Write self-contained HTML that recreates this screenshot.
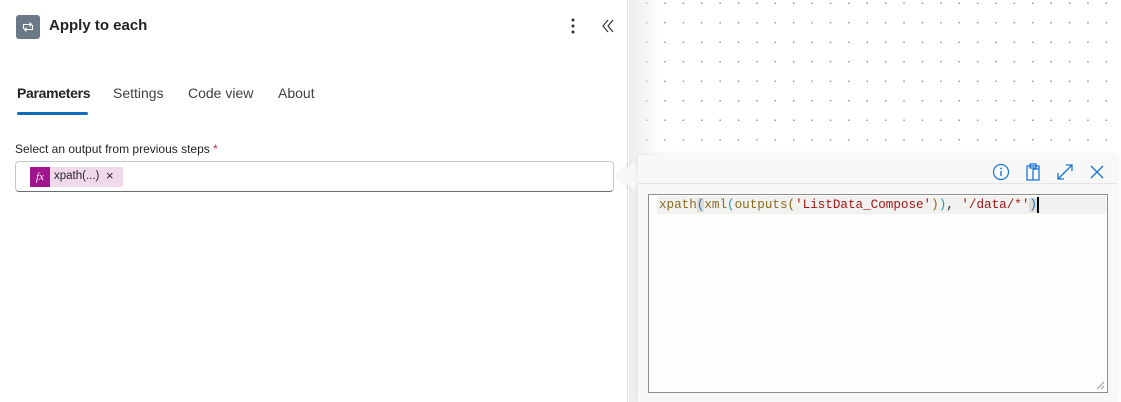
<!DOCTYPE html>
<html><head><meta charset="utf-8"><style>
*{margin:0;padding:0;box-sizing:border-box}
body{width:1121px;height:402px;overflow:hidden;background:#fff;font-family:"Liberation Sans",sans-serif;position:relative}
.left{position:absolute;left:0;top:0;width:628px;height:402px;background:#fff;border-right:1px solid #e0e0e0}
.canvas{position:absolute;left:629px;top:0;right:0;height:402px;background-color:#fff;background-image:radial-gradient(circle,#9a9a9a 0.8px,transparent 1px);background-size:18.4px 19.5px;background-position:-10px 13px}
.shade{position:absolute;left:629px;top:0;width:30px;height:402px;background:linear-gradient(90deg,#ececec,rgba(255,255,255,0))}
.icon{position:absolute;left:16px;top:15px;width:24px;height:24px;background:#6b7885;border-radius:3px}
.title{position:absolute;left:49px;top:17px;font-size:15px;font-weight:bold;color:#242424}
.tabs{position:absolute;top:85px;left:17px;font-size:14px;color:#424242}
.tabs span{position:absolute;white-space:nowrap}
.ul{position:absolute;left:17px;top:112px;width:71px;height:3px;background:#0f6cbd;border-radius:2px}
.lbl{position:absolute;left:15px;top:142px;font-size:12px;color:#242424}
.box{position:absolute;left:15px;top:161px;width:599px;height:31px;border:1px solid #c8c8c8;border-bottom-color:#6e6e6e;border-radius:4px}
.tok{position:absolute;left:14px;top:5px;height:20px;width:93px;background:#f1d9ec;border-radius:2px;font-size:11.5px;color:#242424}
.fx{position:absolute;left:0;top:0;width:20px;height:20px;background:#a0148c;color:#fff;font-family:"Liberation Serif",serif;font-style:italic;font-size:11px;text-align:center;line-height:20px}
.pop{position:absolute;left:638px;top:155px;width:479px;height:247px;background:#f8f8f8;box-shadow:0 0 6px rgba(0,0,0,.08)}
.arrow{position:absolute;left:623px;top:166px;width:20px;height:20px;background:#f8f8f8;transform:rotate(45deg);box-shadow:-2px 2px 4px rgba(0,0,0,.06)}
.sep{position:absolute;left:0;top:28px;width:100%;height:1px;background:#e6e6e6}
.ta{position:absolute;left:10px;top:39px;width:460px;height:199px;border:1px solid #8e8e8e;background:#fdfdfb}
.line{position:absolute;left:8px;top:1px;width:449px;height:18px;background:#f1f1ef;font-family:"Liberation Mono",monospace;font-size:12.6px;line-height:18px;white-space:pre;color:#242424;padding-left:2px}
.f{color:#8b6a1e}.s{color:#a31515}.p{color:#1f6fc4}.t{color:#2b9aa8}
</style></head><body>
<div class="left">
<div class="icon"><svg width="24" height="24" viewBox="0 0 24 24"><path d="M7.5 14V9.5h8M13.5 7.5l2 2-2 2M16.5 10v4.5h-8M10.5 16.5l-2-2 2-2" fill="none" stroke="#fff" stroke-width="1.1"/></svg></div>
<div class="title">Apply to each</div>
<svg style="position:absolute;left:568px;top:17px" width="10" height="18"><circle cx="5" cy="3" r="1.5" fill="#333"/><circle cx="5" cy="9" r="1.5" fill="#333"/><circle cx="5" cy="15" r="1.5" fill="#333"/></svg>
<svg style="position:absolute;left:601px;top:19px" width="14" height="14"><path d="M7 1L2 7l5 6M12 1L7 7l5 6" fill="none" stroke="#333" stroke-width="1.2"/></svg>
<div class="tabs"><span style="left:0;font-weight:bold;color:#242424;letter-spacing:-0.3px">Parameters</span><span style="left:96px">Settings</span><span style="left:171px">Code view</span><span style="left:261px">About</span></div>
<div class="ul"></div>
<div class="lbl">Select an output from previous steps <span style="color:#c4314b">*</span></div>
<div class="box"><div class="tok"><div class="fx">fx</div><span style="position:absolute;left:24px;top:3px">xpath(...)</span><span style="position:absolute;left:76px;top:1px;font-size:13px">×</span></div></div>
</div>
<div class="canvas"></div>
<div class="shade"></div>
<div class="arrow"></div>
<div class="pop">
<svg style="position:absolute;left:354px;top:8px" width="18" height="18"><circle cx="9" cy="9" r="7.5" fill="none" stroke="#1a73d9" stroke-width="1.2"/><path d="M9 8v5" stroke="#1a73d9" stroke-width="1.4"/><circle cx="9" cy="5.5" r="0.9" fill="#1a73d9"/></svg>
<svg style="position:absolute;left:386px;top:7px" width="18" height="20"><path d="M3 4h12v14H3z M6 2h6v4H6z M9 7v11 M9 7h6" fill="none" stroke="#1a73d9" stroke-width="1.3"/></svg>
<svg style="position:absolute;left:418px;top:8px" width="18" height="18"><path d="M2 16L16 2M10 2h6v6M2 10v6h6" fill="none" stroke="#1a73d9" stroke-width="1.3"/></svg>
<svg style="position:absolute;left:451px;top:9px" width="16" height="16"><path d="M2 2l12 12M14 2L2 14" stroke="#1a73d9" stroke-width="1.3"/></svg>
<div class="sep"></div>
<div class="ta"><div class="line"><span class="f">xpath</span><span class="p" style="background:#dcdcd8">(</span><span class="f">xml</span><span class="t">(</span><span class="f">outputs</span><span class="f">(</span><span class="s">'ListData_Compose'</span><span class="f">)</span><span class="t">)</span>, <span class="s">'/data/*'</span><span class="p" style="background:#dcdcd8">)</span><span style="display:inline-block;width:2px;height:16px;background:#000;vertical-align:middle"></span></div>
<svg style="position:absolute;right:2px;bottom:2px" width="10" height="10"><path d="M9 2L2 9M9 6L6 9" stroke="#999" stroke-width="1"/></svg>
</div>
</div>
</body></html>
